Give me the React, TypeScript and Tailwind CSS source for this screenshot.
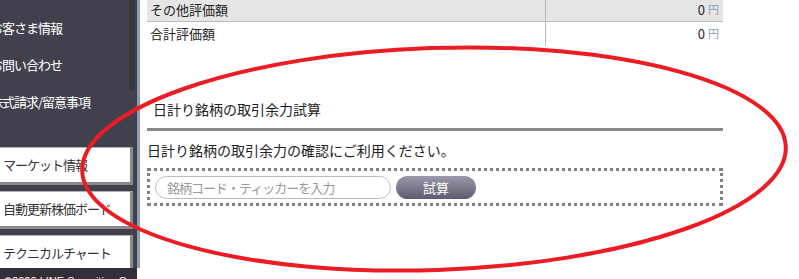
import React from "react";

export default function App() {
  const jp = "font-['Noto_Sans_CJK_JP','Noto_Sans',sans-serif]";
  return (
    <div className={`relative flex h-[279px] w-[799px] overflow-hidden bg-white ${jp}`}>
      {/* Left column */}
      <div className="flex w-[140px] shrink-0 flex-col">
        <div className="flex flex-1 min-h-0">
          <div className="relative w-[137px] overflow-hidden bg-[#41414d]">
            <div className="flex flex-col pt-[9px]">
              {["お客さま情報", "お問い合わせ", "株式請求/留意事項"].map((t) => (
                <div
                  key={t}
                  className="flex h-[37px] items-center whitespace-nowrap ml-[-10px] text-[13px] tracking-[-1px] text-white"
                >
                  {t}
                </div>
              ))}
            </div>
            <div className="mt-[27px] flex flex-col gap-[6px]">
              {["マーケット情報", "自動更新株価ボード", "テクニカルチャート"].map((t) => (
                <div
                  key={t}
                  className="flex h-[38px] w-[133px] shrink-0 items-center whitespace-nowrap border-t border-t-[#b0b0b0] border-r-[3px] border-r-[#8a8a8a] border-b-[3px] border-b-[#8a8a8a] bg-white pl-[3px] text-[13px] tracking-[-1px] text-[#333]"
                >
                  {t}
                </div>
              ))}
            </div>
            {/* scrollbar thumb */}
            <div className="absolute right-[2px] top-0 h-[91px] w-[6px] rounded-b-full bg-[#36363e]" />
          </div>
          <div className="w-[3px] bg-[#8c9db3]" />
        </div>
        <div className="h-[11px] w-[137px] overflow-hidden bg-[#303038]">
          <div className="mt-[7px] whitespace-nowrap pl-[4px] font-['Liberation_Sans',sans-serif] text-[11px] leading-[13px] text-white">
            ©2020 LINE Securities Corporation
          </div>
        </div>
      </div>

      {/* Main */}
      <div className="flex-1 pl-[7px]">
        <div className="w-[576px]">
          {/* table */}
          <div className="flex h-[22px] border-b border-[#bbbbbb] bg-[#e6e6e6]">
            <div className="flex w-[399px] items-center border-r border-[#bbbbbb] pl-[3px] pb-[2px] text-[13px] text-[#222]">
              その他評価額
            </div>
            <div className="flex flex-1 items-center justify-end pr-[4px] pb-[2px]">
              <span className="text-[13px] text-[#1c1c3a]">0</span>
              <span className="ml-[3px] text-[11px] text-[#8a9bb0]">円</span>
            </div>
          </div>
          <div className="flex h-[24px]">
            <div className="flex w-[399px] items-center border-r border-[#bbbbbb] pl-[3px] pb-[1px] text-[13px] text-[#222]">
              合計評価額
            </div>
            <div className="flex flex-1 items-center justify-end pr-[4px] pb-[1px]">
              <span className="text-[13px] text-[#1c1c3a]">0</span>
              <span className="ml-[3px] text-[11px] text-[#8a9bb0]">円</span>
            </div>
          </div>

          {/* section */}
          <div className="mt-[53px] h-[20px] pl-[6px] text-[14px] leading-[20px] text-[#222]">
            日計り銘柄の取引余力試算
          </div>
          <div className="mt-[9px] h-[3px] bg-[#888888]" />
          <div className="mt-[9px] h-[20px] text-[14px] leading-[20px] text-[#222]">
            日計り銘柄の取引余力の確認にご利用ください。
          </div>
          <div className="mt-[8px] flex h-[38px] items-start gap-[5px] border-[3px] border-dotted border-[#808080] pl-[5px] pt-[5px]">
            <div className="flex h-[23px] w-[236px] items-center rounded-full border border-[#bbbbbb] bg-white pl-[11px] text-[13px] tracking-[-1px] text-[#999999]">
              銘柄コード・ティッカーを入力
            </div>
            <div className="flex h-[23px] w-[80px] items-center justify-center rounded-full bg-[linear-gradient(#9a9aaa,#5c5c6e)] text-[13px] text-white">
              試算
            </div>
          </div>
        </div>
      </div>

      {/* red annotation ellipse */}
      <svg
        className="pointer-events-none absolute left-0 top-0"
        width="799"
        height="279"
        viewBox="0 0 799 279"
      >
        <ellipse
          cx="434"
          cy="159"
          rx="352"
          ry="111"
          transform="rotate(-2 434 159)"
          fill="none"
          stroke="#ec1c24"
          strokeWidth="4"
        />
      </svg>
    </div>
  );
}
